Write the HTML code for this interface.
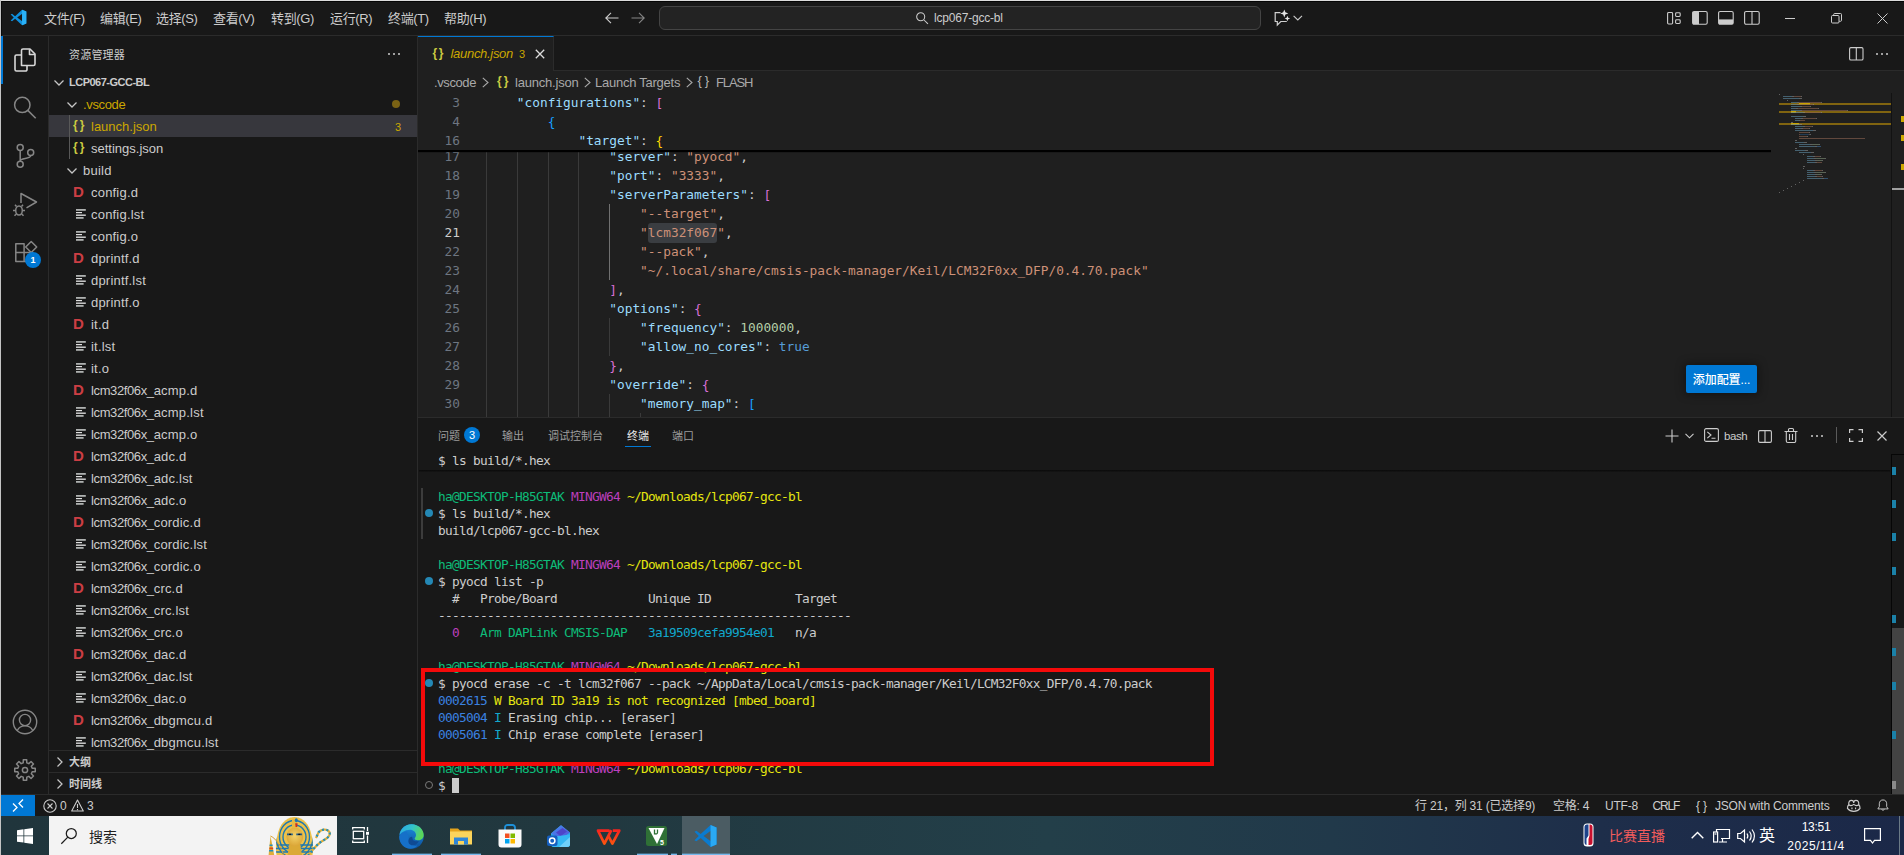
<!DOCTYPE html>
<html lang="zh-CN"><head><meta charset="utf-8"><title>launch.json - lcp067-gcc-bl - Visual Studio Code</title>
<style>
*{box-sizing:border-box;margin:0;padding:0}
html,body{width:1904px;height:855px;overflow:hidden;background:#181818}
body{position:relative;font-family:"Liberation Sans","Noto Sans CJK SC",sans-serif;font-size:13px;color:#ccc;-webkit-font-smoothing:antialiased}
.a{position:absolute;white-space:pre}
.b{position:absolute}
svg{position:absolute;overflow:visible}
.mono{font-family:"DejaVu Sans Mono","Liberation Mono","Noto Sans CJK SC",monospace}
.row{position:absolute;left:49px;width:368px;height:22px}
.row .t{position:absolute;top:1px;line-height:22px;font-size:13px;white-space:pre;letter-spacing:0.2px}
.row .t i{font-style:normal;letter-spacing:-0.38px}
.ln{position:absolute;left:418px;width:42px;text-align:right;font-family:"DejaVu Sans Mono","Liberation Mono","Noto Sans CJK SC",monospace;font-size:12.8px;letter-spacing:0;color:#6e7681;line-height:19px;height:19px}
.cl{position:absolute;left:486px;font-family:"DejaVu Sans Mono","Liberation Mono","Noto Sans CJK SC",monospace;font-size:12.8px;letter-spacing:0;line-height:19px;height:19px;white-space:pre;color:#ccc}
.k{color:#9cdcfe}.s{color:#ce9178}.n{color:#b5cea8}.c{color:#569cd6}
.b1{color:#ffd700}.b2{color:#da70d6}.b3{color:#179fff}
.tl{position:absolute;left:438px;font-family:"DejaVu Sans Mono","Liberation Mono","Noto Sans CJK SC",monospace;font-size:12.8px;letter-spacing:-0.706px;line-height:17px;height:17px;white-space:pre;color:#ccc}
.g{color:#0dbc79}.m{color:#bc3fbc}.y{color:#e5e510}.cy{color:#11a8cd}.bl{color:#3b82e0}
.st{position:absolute;top:796px;height:21px;line-height:21px;font-size:12px;white-space:pre;color:#ccc;letter-spacing:-0.2px}
</style></head><body>

<div class="b" style="left:0;top:0;width:1904px;height:36px;background:#181818;border-bottom:1px solid #2b2b2b"></div>
<div class="b" style="left:0;top:0;width:1904px;height:1px;background:#dcdcdc"></div>
<div class="b" style="left:1px;top:1px;width:1903px;height:1px;background:#050505"></div>
<div class="b" style="left:1px;top:1px;width:1px;height:35px;background:#0a0a0a"></div>
<div class="b" style="left:0;top:0;width:1px;height:855px;background:#c4c4c4;z-index:50"></div>
<svg style="left:10px;top:9.200px" width="17" height="17" viewBox="0 0 100 100"><path d="M71 4 L30 42 L12 28 L4 32 L22 50 L4 68 L12 72 L30 58 L71 96 L96 85 V15 Z M72 28 V72 L42 50 Z" fill="#0f8fdc" fill-rule="evenodd"/><path d="M71 4 L96 15 V85 L71 96 Z" fill="#2ab1f6"/></svg>
<div class="a" style="left:44px;top:9px;line-height:20px;font-size:13px;letter-spacing:-0.350px;color:#ccc">文件(F)</div>
<div class="a" style="left:100px;top:9px;line-height:20px;font-size:13px;letter-spacing:-0.350px;color:#ccc">编辑(E)</div>
<div class="a" style="left:156px;top:9px;line-height:20px;font-size:13px;letter-spacing:-0.350px;color:#ccc">选择(S)</div>
<div class="a" style="left:213px;top:9px;line-height:20px;font-size:13px;letter-spacing:-0.350px;color:#ccc">查看(V)</div>
<div class="a" style="left:271px;top:9px;line-height:20px;font-size:13px;letter-spacing:-0.350px;color:#ccc">转到(G)</div>
<div class="a" style="left:330px;top:9px;line-height:20px;font-size:13px;letter-spacing:-0.350px;color:#ccc">运行(R)</div>
<div class="a" style="left:388px;top:9px;line-height:20px;font-size:13px;letter-spacing:-0.350px;color:#ccc">终端(T)</div>
<div class="a" style="left:444px;top:9px;line-height:20px;font-size:13px;letter-spacing:-0.350px;color:#ccc">帮助(H)</div>
<svg style="left:604px;top:10px" width="16" height="16" viewBox="0 0 16 16" fill="none" stroke="#ccc" stroke-width="1.1"><path d="M14.5 8H2M7 2.8 1.8 8 7 13.2"/></svg>
<svg style="left:630px;top:10px" width="16" height="16" viewBox="0 0 16 16" fill="none" stroke="#858585" stroke-width="1.1"><path d="M1.5 8H14M9 2.8 14.2 8 9 13.2"/></svg>
<div class="b" style="left:659px;top:6px;width:602px;height:24px;background:#232323;border:1px solid #444;border-radius:6px"></div>
<svg style="left:915px;top:11px" width="14" height="14" viewBox="0 0 16 16" fill="none" stroke="#ccc" stroke-width="1.2"><circle cx="6.5" cy="6.5" r="4.6"/><path d="M10 10l4.8 4.8"/></svg>
<div class="a" style="left:934px;top:8px;line-height:20px;font-size:12px;color:#ccc;letter-spacing:-0.2px">lcp067-gcc-bl</div>
<svg style="left:1273px;top:8px" width="19" height="19" viewBox="1273 8 19 19" fill="none" stroke="#d0d0d0" stroke-width="1.200"><path d="M1280.500 12.600H1275.200V21.500H1277.300V25L1280.800 21.500H1286.800"/><path d="M1284.300 9.400l1.100 2.900 2.900 1.100-2.900 1.100-1.100 2.900-1.100-2.900-2.900-1.100 2.900-1.100z" fill="#e4e4e4" stroke="none"/><path d="M1287.400 15.700l.8 2 2 .8-2 .8-.8 2-.8-2-2-.8 2-.8z" fill="#e4e4e4" stroke="none"/></svg>
<svg style="left:1293px;top:15px" width="10" height="6" viewBox="0 0 10 6" fill="none" stroke="#ccc" stroke-width="1.100"><path d="M.600.800 4.800 5 9 .800"/></svg>
<svg style="left:1667px;top:11.500px" width="15" height="13" preserveAspectRatio="none" viewBox="0 0 15 14" fill="none" stroke="#ccc" stroke-width="1.1"><rect x=".6" y=".6" width="5" height="12.2" rx="1"/><rect x="8.6" y=".9" width="4.6" height="4" rx="1"/><rect x="8.6" y="8.3" width="4.6" height="4" rx="1"/></svg>
<svg style="left:1692px;top:11px" width="16" height="14" preserveAspectRatio="none" viewBox="0 0 16 15" fill="none" stroke="#ccc" stroke-width="1.1"><rect x=".6" y=".6" width="14.6" height="13.6" rx="1.5"/><path d="M1 1h6v13H1z" fill="#ccc" stroke="none"/></svg>
<svg style="left:1718px;top:11px" width="16" height="14" preserveAspectRatio="none" viewBox="0 0 16 15" fill="none" stroke="#ccc" stroke-width="1.1"><rect x=".6" y=".6" width="14.6" height="13.6" rx="1.5"/><path d="M1 9h14v5H1z" fill="#ccc" stroke="none"/></svg>
<svg style="left:1744px;top:11px" width="16" height="14" preserveAspectRatio="none" viewBox="0 0 16 15" fill="none" stroke="#ccc" stroke-width="1.1"><rect x=".6" y=".6" width="14.6" height="13.6" rx="1.5"/><path d="M8 1v13"/></svg>
<div class="b" style="left:1785px;top:18px;width:10px;height:1px;background:#ccc"></div>
<svg style="left:1831px;top:13px" width="11" height="11" viewBox="0 0 11 11" fill="none" stroke="#ccc" stroke-width="1"><rect x=".5" y="2.5" width="7.5" height="7.5" rx="1"/><path d="M2.7 2.4V1.5a1 1 0 0 1 1-1h5.8a1 1 0 0 1 1 1v5.8a1 1 0 0 1-1 1H8.2"/></svg>
<svg style="left:1877px;top:13px" width="11" height="11" viewBox="0 0 11 11" fill="none" stroke="#ccc" stroke-width="1"><path d="M.5.5l10 10M10.500.5l-10 10"/></svg>
<div class="b" style="left:1px;top:36px;width:48px;height:759px;background:#181818;border-right:1px solid #2b2b2b"></div>
<div class="b" style="left:1px;top:36px;width:2px;height:48px;background:#0078d4"></div>
<svg style="left:13px;top:47px" width="24" height="26" viewBox="0 0 24 26" fill="none" stroke="#d7d7d7" stroke-width="1.6" stroke-linejoin="round"><path d="M8.5 18.5V3.5a1.5 1.5 0 0 1 1.500-1.5H17l5 5v10a1.5 1.500 0 0 1-1.500 1.500z"/><path d="M16.500 2.200V7.500H22" /><path d="M8.500 8H3.500A1.500 1.500 0 0 0 2 9.500v13A1.500 1.500 0 0 0 3.500 24h9a1.500 1.500 0 0 0 1.500-1.500v-4"/></svg>
<svg style="left:13px;top:95px" width="24" height="24" viewBox="0 0 24 24" fill="none" stroke="#868686" stroke-width="1.500"><circle cx="9.300" cy="9.900" r="7.700"/><path d="M14.800 15.400 22.700 23.300"/></svg>
<svg style="left:13px;top:143px" width="24" height="26" viewBox="0 0 24 26" fill="none" stroke="#868686" stroke-width="1.500"><circle cx="7.200" cy="4.500" r="3"/><circle cx="7.200" cy="21.200" r="3"/><circle cx="17.700" cy="9.500" r="3"/><path d="M7.200 7.500v10.700M17.700 12.500c0 4-10.500 2-10.500 5.500"/></svg>
<svg style="left:11px;top:190px" width="28" height="28" viewBox="0 0 28 28" fill="none" stroke="#868686" stroke-width="1.500" stroke-linejoin="round"><path d="M10 13V3.500L25.500 12 15.500 17.800"/><ellipse cx="8" cy="20.500" rx="3.300" ry="4.500"/><path d="M5.500 16.500 4 14.800M10.500 16.500l1.500-1.700M4.700 20.500H2M11.300 20.500H14M5.300 24l-1.800 1.800M10.700 24l1.800 1.800"/></svg>
<svg style="left:15px;top:239px" width="24" height="24" viewBox="0 0 24 24" fill="none" stroke="#868686" stroke-width="1.500" stroke-linejoin="round"><path d="M.800 4.800h8.300v8.800H.800zM.800 13.600h8.300v8.800H.800zM9.100 13.600h8.300v8.800H9.100z"/><path d="M16.200 2.500 21.700 8 16.200 13.500 10.700 8z"/></svg>
<div class="b" style="left:25px;top:252px;width:16px;height:16px;border-radius:8px;background:#0078d4"></div>
<div class="a" style="left:25px;top:252px;width:16px;text-align:center;line-height:16px;font-size:9px;font-weight:bold;color:#fff">1</div>
<svg style="left:12px;top:709px" width="26" height="26" viewBox="0 0 26 26" fill="none" stroke="#868686" stroke-width="1.400"><circle cx="13" cy="13" r="11.700"/><circle cx="13" cy="11" r="5.600"/><path d="M5.300 21.500c1.500-3 4.300-4.600 7.700-4.600s6.200 1.600 7.700 4.600"/></svg>
<svg style="left:14px;top:759px" width="22" height="22" viewBox="0 0 22 22" fill="none" stroke="#868686" stroke-width="1.500" stroke-linejoin="round"><circle cx="11" cy="11" r="2.600"/><path d="M9.22 3.82 L9.29 0.74 L12.71 0.74 L12.78 3.82 L14.82 4.66 L17.05 2.54 L19.46 4.95 L17.34 7.18 L18.18 9.22 L21.26 9.29 L21.26 12.71 L18.18 12.78 L17.34 14.82 L19.46 17.05 L17.05 19.46 L14.82 17.34 L12.78 18.18 L12.71 21.26 L9.29 21.26 L9.22 18.18 L7.18 17.34 L4.95 19.46 L2.54 17.05 L4.66 14.82 L3.82 12.78 L0.74 12.71 L0.74 9.29 L3.82 9.22 L4.66 7.18 L2.54 4.95 L4.95 2.54 L7.18 4.66Z"/></svg>
<div class="b" style="left:49px;top:36px;width:369px;height:759px;background:#181818;border-right:1px solid #2b2b2b"></div>
<div class="a" style="left:69px;top:44.500px;line-height:20px;font-size:11px;color:#ccc;letter-spacing:0.200px">资源管理器</div>
<svg style="left:387px;top:52px" width="14" height="4" viewBox="0 0 14 4" fill="#ccc"><circle cx="2" cy="2" r="1"/><circle cx="7" cy="2" r="1"/><circle cx="12" cy="2" r="1"/></svg>
<svg style="left:54px;top:79.5px" width="10" height="6" viewBox="0 0 10 6" fill="none" stroke="#c5c5c5" stroke-width="1.250"><path d="M.5.500 5 5 9.500.500"/></svg>
<div class="a" style="left:69px;top:71px;line-height:22px;font-size:11px;font-weight:bold;color:#ccc;letter-spacing:-0.500px">LCP067-GCC-BL</div>
<div class="b" style="left:49px;top:93px;width:368px;height:657px;overflow:hidden">
<div class="row" style="left:0;top:0px;">
<svg style="left:18px;top:8.5px" width="10" height="6" viewBox="0 0 10 6" fill="none" stroke="#c5c5c5" stroke-width="1.250"><path d="M.5.500 5 5 9.500.500"/></svg>
<div class="t" style="left:34px;color:#cca700;letter-spacing:-0.350px">.vscode</div>
<div class="b" style="left:343px;top:7px;width:8px;height:8px;border-radius:4px;background:#7a6214"></div>
</div>
<div class="row" style="left:0;top:22px; background:#37373d;">
<div class="a" style="left:24px;top:-1px;line-height:22px;font-size:12px;font-weight:bold;color:#cbcb41;letter-spacing:2px">{}</div>
<div class="t" style="left:42px;color:#cca700;letter-spacing:0">launch.json</div>
<div class="t" style="left:346px;color:#cca700;font-size:11px">3</div>
</div>
<div class="row" style="left:0;top:44px;">
<div class="a" style="left:24px;top:-1px;line-height:22px;font-size:12px;font-weight:bold;color:#cbcb41;letter-spacing:2px">{}</div>
<div class="t" style="left:42px;color:#ccc;letter-spacing:0">settings.json</div>
</div>
<div class="row" style="left:0;top:66px;">
<svg style="left:18px;top:8.5px" width="10" height="6" viewBox="0 0 10 6" fill="none" stroke="#c5c5c5" stroke-width="1.250"><path d="M.5.500 5 5 9.500.500"/></svg>
<div class="t" style="left:34px;color:#ccc;letter-spacing:0.250px">build</div>
</div>
<div class="row" style="left:0;top:88px;">
<div class="a" style="left:24px;top:0px;line-height:22px;font-size:15px;font-weight:bold;color:#cc3e44">D</div>
<div class="t" style="left:42px;color:#ccc">config.d</div>
</div>
<div class="row" style="left:0;top:110px;">
<svg style="left:27px;top:6px" width="10" height="10" viewBox="0 0 10 10" fill="#c3c6c5"><rect x="0" y="0" width="9.800" height="1.800" fill="#aeb1b0"/><rect x="0" y="3" width="6" height="1.200" fill="#e0e0e0"/><rect x="0" y="5.500" width="9.800" height="1.400" fill="#d8d8d8"/><rect x="0" y="8" width="7.600" height="1.800" fill="#aeb1b0"/></svg>
<div class="t" style="left:42px;color:#ccc">config.lst</div>
</div>
<div class="row" style="left:0;top:132px;">
<svg style="left:27px;top:6px" width="10" height="10" viewBox="0 0 10 10" fill="#c3c6c5"><rect x="0" y="0" width="9.800" height="1.800" fill="#aeb1b0"/><rect x="0" y="3" width="6" height="1.200" fill="#e0e0e0"/><rect x="0" y="5.500" width="9.800" height="1.400" fill="#d8d8d8"/><rect x="0" y="8" width="7.600" height="1.800" fill="#aeb1b0"/></svg>
<div class="t" style="left:42px;color:#ccc">config.o</div>
</div>
<div class="row" style="left:0;top:154px;">
<div class="a" style="left:24px;top:0px;line-height:22px;font-size:15px;font-weight:bold;color:#cc3e44">D</div>
<div class="t" style="left:42px;color:#ccc">dprintf.d</div>
</div>
<div class="row" style="left:0;top:176px;">
<svg style="left:27px;top:6px" width="10" height="10" viewBox="0 0 10 10" fill="#c3c6c5"><rect x="0" y="0" width="9.800" height="1.800" fill="#aeb1b0"/><rect x="0" y="3" width="6" height="1.200" fill="#e0e0e0"/><rect x="0" y="5.500" width="9.800" height="1.400" fill="#d8d8d8"/><rect x="0" y="8" width="7.600" height="1.800" fill="#aeb1b0"/></svg>
<div class="t" style="left:42px;color:#ccc">dprintf.lst</div>
</div>
<div class="row" style="left:0;top:198px;">
<svg style="left:27px;top:6px" width="10" height="10" viewBox="0 0 10 10" fill="#c3c6c5"><rect x="0" y="0" width="9.800" height="1.800" fill="#aeb1b0"/><rect x="0" y="3" width="6" height="1.200" fill="#e0e0e0"/><rect x="0" y="5.500" width="9.800" height="1.400" fill="#d8d8d8"/><rect x="0" y="8" width="7.600" height="1.800" fill="#aeb1b0"/></svg>
<div class="t" style="left:42px;color:#ccc">dprintf.o</div>
</div>
<div class="row" style="left:0;top:220px;">
<div class="a" style="left:24px;top:0px;line-height:22px;font-size:15px;font-weight:bold;color:#cc3e44">D</div>
<div class="t" style="left:42px;color:#ccc">it.d</div>
</div>
<div class="row" style="left:0;top:242px;">
<svg style="left:27px;top:6px" width="10" height="10" viewBox="0 0 10 10" fill="#c3c6c5"><rect x="0" y="0" width="9.800" height="1.800" fill="#aeb1b0"/><rect x="0" y="3" width="6" height="1.200" fill="#e0e0e0"/><rect x="0" y="5.500" width="9.800" height="1.400" fill="#d8d8d8"/><rect x="0" y="8" width="7.600" height="1.800" fill="#aeb1b0"/></svg>
<div class="t" style="left:42px;color:#ccc">it.lst</div>
</div>
<div class="row" style="left:0;top:264px;">
<svg style="left:27px;top:6px" width="10" height="10" viewBox="0 0 10 10" fill="#c3c6c5"><rect x="0" y="0" width="9.800" height="1.800" fill="#aeb1b0"/><rect x="0" y="3" width="6" height="1.200" fill="#e0e0e0"/><rect x="0" y="5.500" width="9.800" height="1.400" fill="#d8d8d8"/><rect x="0" y="8" width="7.600" height="1.800" fill="#aeb1b0"/></svg>
<div class="t" style="left:42px;color:#ccc">it.o</div>
</div>
<div class="row" style="left:0;top:286px;">
<div class="a" style="left:24px;top:0px;line-height:22px;font-size:15px;font-weight:bold;color:#cc3e44">D</div>
<div class="t" style="left:42px;color:#ccc"><i>lcm32f06x_</i>acmp.d</div>
</div>
<div class="row" style="left:0;top:308px;">
<svg style="left:27px;top:6px" width="10" height="10" viewBox="0 0 10 10" fill="#c3c6c5"><rect x="0" y="0" width="9.800" height="1.800" fill="#aeb1b0"/><rect x="0" y="3" width="6" height="1.200" fill="#e0e0e0"/><rect x="0" y="5.500" width="9.800" height="1.400" fill="#d8d8d8"/><rect x="0" y="8" width="7.600" height="1.800" fill="#aeb1b0"/></svg>
<div class="t" style="left:42px;color:#ccc"><i>lcm32f06x_</i>acmp.lst</div>
</div>
<div class="row" style="left:0;top:330px;">
<svg style="left:27px;top:6px" width="10" height="10" viewBox="0 0 10 10" fill="#c3c6c5"><rect x="0" y="0" width="9.800" height="1.800" fill="#aeb1b0"/><rect x="0" y="3" width="6" height="1.200" fill="#e0e0e0"/><rect x="0" y="5.500" width="9.800" height="1.400" fill="#d8d8d8"/><rect x="0" y="8" width="7.600" height="1.800" fill="#aeb1b0"/></svg>
<div class="t" style="left:42px;color:#ccc"><i>lcm32f06x_</i>acmp.o</div>
</div>
<div class="row" style="left:0;top:352px;">
<div class="a" style="left:24px;top:0px;line-height:22px;font-size:15px;font-weight:bold;color:#cc3e44">D</div>
<div class="t" style="left:42px;color:#ccc"><i>lcm32f06x_</i>adc.d</div>
</div>
<div class="row" style="left:0;top:374px;">
<svg style="left:27px;top:6px" width="10" height="10" viewBox="0 0 10 10" fill="#c3c6c5"><rect x="0" y="0" width="9.800" height="1.800" fill="#aeb1b0"/><rect x="0" y="3" width="6" height="1.200" fill="#e0e0e0"/><rect x="0" y="5.500" width="9.800" height="1.400" fill="#d8d8d8"/><rect x="0" y="8" width="7.600" height="1.800" fill="#aeb1b0"/></svg>
<div class="t" style="left:42px;color:#ccc"><i>lcm32f06x_</i>adc.lst</div>
</div>
<div class="row" style="left:0;top:396px;">
<svg style="left:27px;top:6px" width="10" height="10" viewBox="0 0 10 10" fill="#c3c6c5"><rect x="0" y="0" width="9.800" height="1.800" fill="#aeb1b0"/><rect x="0" y="3" width="6" height="1.200" fill="#e0e0e0"/><rect x="0" y="5.500" width="9.800" height="1.400" fill="#d8d8d8"/><rect x="0" y="8" width="7.600" height="1.800" fill="#aeb1b0"/></svg>
<div class="t" style="left:42px;color:#ccc"><i>lcm32f06x_</i>adc.o</div>
</div>
<div class="row" style="left:0;top:418px;">
<div class="a" style="left:24px;top:0px;line-height:22px;font-size:15px;font-weight:bold;color:#cc3e44">D</div>
<div class="t" style="left:42px;color:#ccc"><i>lcm32f06x_</i>cordic.d</div>
</div>
<div class="row" style="left:0;top:440px;">
<svg style="left:27px;top:6px" width="10" height="10" viewBox="0 0 10 10" fill="#c3c6c5"><rect x="0" y="0" width="9.800" height="1.800" fill="#aeb1b0"/><rect x="0" y="3" width="6" height="1.200" fill="#e0e0e0"/><rect x="0" y="5.500" width="9.800" height="1.400" fill="#d8d8d8"/><rect x="0" y="8" width="7.600" height="1.800" fill="#aeb1b0"/></svg>
<div class="t" style="left:42px;color:#ccc"><i>lcm32f06x_</i>cordic.lst</div>
</div>
<div class="row" style="left:0;top:462px;">
<svg style="left:27px;top:6px" width="10" height="10" viewBox="0 0 10 10" fill="#c3c6c5"><rect x="0" y="0" width="9.800" height="1.800" fill="#aeb1b0"/><rect x="0" y="3" width="6" height="1.200" fill="#e0e0e0"/><rect x="0" y="5.500" width="9.800" height="1.400" fill="#d8d8d8"/><rect x="0" y="8" width="7.600" height="1.800" fill="#aeb1b0"/></svg>
<div class="t" style="left:42px;color:#ccc"><i>lcm32f06x_</i>cordic.o</div>
</div>
<div class="row" style="left:0;top:484px;">
<div class="a" style="left:24px;top:0px;line-height:22px;font-size:15px;font-weight:bold;color:#cc3e44">D</div>
<div class="t" style="left:42px;color:#ccc"><i>lcm32f06x_</i>crc.d</div>
</div>
<div class="row" style="left:0;top:506px;">
<svg style="left:27px;top:6px" width="10" height="10" viewBox="0 0 10 10" fill="#c3c6c5"><rect x="0" y="0" width="9.800" height="1.800" fill="#aeb1b0"/><rect x="0" y="3" width="6" height="1.200" fill="#e0e0e0"/><rect x="0" y="5.500" width="9.800" height="1.400" fill="#d8d8d8"/><rect x="0" y="8" width="7.600" height="1.800" fill="#aeb1b0"/></svg>
<div class="t" style="left:42px;color:#ccc"><i>lcm32f06x_</i>crc.lst</div>
</div>
<div class="row" style="left:0;top:528px;">
<svg style="left:27px;top:6px" width="10" height="10" viewBox="0 0 10 10" fill="#c3c6c5"><rect x="0" y="0" width="9.800" height="1.800" fill="#aeb1b0"/><rect x="0" y="3" width="6" height="1.200" fill="#e0e0e0"/><rect x="0" y="5.500" width="9.800" height="1.400" fill="#d8d8d8"/><rect x="0" y="8" width="7.600" height="1.800" fill="#aeb1b0"/></svg>
<div class="t" style="left:42px;color:#ccc"><i>lcm32f06x_</i>crc.o</div>
</div>
<div class="row" style="left:0;top:550px;">
<div class="a" style="left:24px;top:0px;line-height:22px;font-size:15px;font-weight:bold;color:#cc3e44">D</div>
<div class="t" style="left:42px;color:#ccc"><i>lcm32f06x_</i>dac.d</div>
</div>
<div class="row" style="left:0;top:572px;">
<svg style="left:27px;top:6px" width="10" height="10" viewBox="0 0 10 10" fill="#c3c6c5"><rect x="0" y="0" width="9.800" height="1.800" fill="#aeb1b0"/><rect x="0" y="3" width="6" height="1.200" fill="#e0e0e0"/><rect x="0" y="5.500" width="9.800" height="1.400" fill="#d8d8d8"/><rect x="0" y="8" width="7.600" height="1.800" fill="#aeb1b0"/></svg>
<div class="t" style="left:42px;color:#ccc"><i>lcm32f06x_</i>dac.lst</div>
</div>
<div class="row" style="left:0;top:594px;">
<svg style="left:27px;top:6px" width="10" height="10" viewBox="0 0 10 10" fill="#c3c6c5"><rect x="0" y="0" width="9.800" height="1.800" fill="#aeb1b0"/><rect x="0" y="3" width="6" height="1.200" fill="#e0e0e0"/><rect x="0" y="5.500" width="9.800" height="1.400" fill="#d8d8d8"/><rect x="0" y="8" width="7.600" height="1.800" fill="#aeb1b0"/></svg>
<div class="t" style="left:42px;color:#ccc"><i>lcm32f06x_</i>dac.o</div>
</div>
<div class="row" style="left:0;top:616px;">
<div class="a" style="left:24px;top:0px;line-height:22px;font-size:15px;font-weight:bold;color:#cc3e44">D</div>
<div class="t" style="left:42px;color:#ccc"><i>lcm32f06x_</i>dbgmcu.d</div>
</div>
<div class="row" style="left:0;top:638px;">
<svg style="left:27px;top:6px" width="10" height="10" viewBox="0 0 10 10" fill="#c3c6c5"><rect x="0" y="0" width="9.800" height="1.800" fill="#aeb1b0"/><rect x="0" y="3" width="6" height="1.200" fill="#e0e0e0"/><rect x="0" y="5.500" width="9.800" height="1.400" fill="#d8d8d8"/><rect x="0" y="8" width="7.600" height="1.800" fill="#aeb1b0"/></svg>
<div class="t" style="left:42px;color:#ccc"><i>lcm32f06x_</i>dbgmcu.lst</div>
</div>
<div class="b" style="left:20px;top:22px;width:1px;height:44px;background:#585858"></div>
</div>
<div class="b" style="left:49px;top:750px;width:368px;height:22px;background:#181818;border-top:1px solid #2b2b2b"></div>
<svg style="left:57px;top:757px" width="6" height="10" viewBox="0 0 6 10" fill="none" stroke="#c5c5c5" stroke-width="1.250"><path d="M.5.500 5 5 .500 9.500"/></svg>
<div class="a" style="left:69px;top:751px;line-height:22px;font-size:11px;font-weight:bold;color:#ccc">大纲</div>
<div class="b" style="left:49px;top:772px;width:368px;height:22px;background:#181818;border-top:1px solid #2b2b2b"></div>
<svg style="left:57px;top:779px" width="6" height="10" viewBox="0 0 6 10" fill="none" stroke="#c5c5c5" stroke-width="1.250"><path d="M.5.500 5 5 .500 9.500"/></svg>
<div class="a" style="left:69px;top:773px;line-height:22px;font-size:11px;font-weight:bold;color:#ccc">时间线</div>
<div class="b" style="left:418px;top:36px;width:1486px;height:35px;background:#181818;border-bottom:1px solid #2b2b2b"></div>
<div class="b" style="left:418px;top:36px;width:136px;height:35px;background:#1f1f1f;border-top:1px solid #0078d4;border-right:1px solid #2b2b2b"></div>
<div class="a" style="left:432.500px;top:41.5px;line-height:22px;font-size:12px;font-weight:bold;color:#cbcb41;letter-spacing:1.700px">{}</div>
<div class="a" style="left:450.500px;top:43px;line-height:22px;font-size:13px;font-style:italic;color:#cca700;letter-spacing:-0.300px">launch.json</div>
<div class="a" style="left:519px;top:42.500px;line-height:22px;font-size:11px;color:#cca700">3</div>
<svg style="left:535px;top:49px" width="10" height="10" viewBox="0 0 10 10" fill="none" stroke="#ddd" stroke-width="1.300"><path d="M.8.800l8.400 8.400M9.200.800.800 9.200"/></svg>
<svg style="left:1849px;top:47px" width="15" height="14" viewBox="0 0 15 14" fill="none" stroke="#ccc" stroke-width="1.100"><rect x=".6" y=".6" width="13.400" height="12.400" rx="1.300"/><path d="M7.300 1v12"/></svg>
<svg style="left:1875px;top:52px" width="14" height="4" viewBox="0 0 14 4" fill="#ccc"><circle cx="2" cy="2" r="1"/><circle cx="7" cy="2" r="1"/><circle cx="12" cy="2" r="1"/></svg>
<div class="b" style="left:418px;top:71px;width:1486px;height:347px;background:#1f1f1f"></div>
<div class="a" style="left:434px;top:71.5px;line-height:22px;font-size:13px;color:#a9a9a9;letter-spacing:-0.400px">.vscode</div>
<div class="a" style="left:515px;top:71.5px;line-height:22px;font-size:13px;color:#a9a9a9;letter-spacing:-0.200px">launch.json</div>
<div class="a" style="left:595px;top:71.5px;line-height:22px;font-size:13px;color:#a9a9a9;letter-spacing:-0.250px">Launch Targets</div>
<div class="a" style="left:716px;top:71.5px;line-height:22px;font-size:13px;color:#a9a9a9;letter-spacing:-1.100px">FLASH</div>
<svg style="left:482px;top:77px" width="7" height="11" viewBox="0 0 7 11" fill="none" stroke="#a9a9a9" stroke-width="1.100"><path d="M.8.800 6 5.500.800 10.200"/></svg>
<svg style="left:584px;top:77px" width="7" height="11" viewBox="0 0 7 11" fill="none" stroke="#a9a9a9" stroke-width="1.100"><path d="M.8.800 6 5.500.800 10.200"/></svg>
<svg style="left:686px;top:77px" width="7" height="11" viewBox="0 0 7 11" fill="none" stroke="#a9a9a9" stroke-width="1.100"><path d="M.8.800 6 5.500.800 10.200"/></svg>
<div class="a" style="left:497px;top:70px;line-height:22px;font-size:12px;font-weight:bold;color:#cbcb41;letter-spacing:2px">{}</div>
<div class="a" style="left:697.5px;top:70px;line-height:22px;font-size:13px;color:#b8b8b8;letter-spacing:3px">{}</div>
<div class="b" style="left:418px;top:93px;width:1472px;height:325px;overflow:hidden">
<div class="ln" style="left:0;top:54px;">17</div>
<div class="cl" style="left:68px;top:54px">                <span class="k">&quot;server&quot;</span>: <span class="s">&quot;pyocd&quot;</span>,</div>
<div class="b" style="left:68px;top:54px;width:1px;height:19px;background:#3a3a3a"></div>
<div class="b" style="left:99px;top:54px;width:1px;height:19px;background:#3a3a3a"></div>
<div class="b" style="left:130px;top:54px;width:1px;height:19px;background:#3a3a3a"></div>
<div class="b" style="left:160px;top:54px;width:1px;height:19px;background:#3a3a3a"></div>
<div class="ln" style="left:0;top:73px;">18</div>
<div class="cl" style="left:68px;top:73px">                <span class="k">&quot;port&quot;</span>: <span class="s">&quot;3333&quot;</span>,</div>
<div class="b" style="left:68px;top:73px;width:1px;height:19px;background:#3a3a3a"></div>
<div class="b" style="left:99px;top:73px;width:1px;height:19px;background:#3a3a3a"></div>
<div class="b" style="left:130px;top:73px;width:1px;height:19px;background:#3a3a3a"></div>
<div class="b" style="left:160px;top:73px;width:1px;height:19px;background:#3a3a3a"></div>
<div class="ln" style="left:0;top:92px;">19</div>
<div class="cl" style="left:68px;top:92px">                <span class="k">&quot;serverParameters&quot;</span>: <span class="b2">[</span></div>
<div class="b" style="left:68px;top:92px;width:1px;height:19px;background:#3a3a3a"></div>
<div class="b" style="left:99px;top:92px;width:1px;height:19px;background:#3a3a3a"></div>
<div class="b" style="left:130px;top:92px;width:1px;height:19px;background:#3a3a3a"></div>
<div class="b" style="left:160px;top:92px;width:1px;height:19px;background:#3a3a3a"></div>
<div class="ln" style="left:0;top:111px;">20</div>
<div class="cl" style="left:68px;top:111px">                    <span class="s">&quot;--target&quot;</span>,</div>
<div class="b" style="left:68px;top:111px;width:1px;height:19px;background:#3a3a3a"></div>
<div class="b" style="left:99px;top:111px;width:1px;height:19px;background:#3a3a3a"></div>
<div class="b" style="left:130px;top:111px;width:1px;height:19px;background:#3a3a3a"></div>
<div class="b" style="left:160px;top:111px;width:1px;height:19px;background:#3a3a3a"></div>
<div class="b" style="left:191px;top:111px;width:1px;height:19px;background:#707070"></div>
<div class="ln" style="left:0;top:130px;color:#ccc;">21</div>
<div class="cl" style="left:68px;top:130px">                    <span class="s">&quot;</span><span class="s" style="background:#3a3d41;border-radius:3px;padding:2px 0 2.500px">lcm32f067</span><span class="s">&quot;</span>,</div>
<div class="b" style="left:68px;top:130px;width:1px;height:19px;background:#3a3a3a"></div>
<div class="b" style="left:99px;top:130px;width:1px;height:19px;background:#3a3a3a"></div>
<div class="b" style="left:130px;top:130px;width:1px;height:19px;background:#3a3a3a"></div>
<div class="b" style="left:160px;top:130px;width:1px;height:19px;background:#3a3a3a"></div>
<div class="b" style="left:191px;top:130px;width:1px;height:19px;background:#707070"></div>
<div class="ln" style="left:0;top:149px;">22</div>
<div class="cl" style="left:68px;top:149px">                    <span class="s">&quot;--pack&quot;</span>,</div>
<div class="b" style="left:68px;top:149px;width:1px;height:19px;background:#3a3a3a"></div>
<div class="b" style="left:99px;top:149px;width:1px;height:19px;background:#3a3a3a"></div>
<div class="b" style="left:130px;top:149px;width:1px;height:19px;background:#3a3a3a"></div>
<div class="b" style="left:160px;top:149px;width:1px;height:19px;background:#3a3a3a"></div>
<div class="b" style="left:191px;top:149px;width:1px;height:19px;background:#707070"></div>
<div class="ln" style="left:0;top:168px;">23</div>
<div class="cl" style="left:68px;top:168px">                    <span class="s">&quot;~/.local/share/cmsis-pack-manager/Keil/LCM32F0xx_DFP/0.4.70.pack&quot;</span></div>
<div class="b" style="left:68px;top:168px;width:1px;height:19px;background:#3a3a3a"></div>
<div class="b" style="left:99px;top:168px;width:1px;height:19px;background:#3a3a3a"></div>
<div class="b" style="left:130px;top:168px;width:1px;height:19px;background:#3a3a3a"></div>
<div class="b" style="left:160px;top:168px;width:1px;height:19px;background:#3a3a3a"></div>
<div class="b" style="left:191px;top:168px;width:1px;height:19px;background:#707070"></div>
<div class="ln" style="left:0;top:187px;">24</div>
<div class="cl" style="left:68px;top:187px">                <span class="b2">]</span>,</div>
<div class="b" style="left:68px;top:187px;width:1px;height:19px;background:#3a3a3a"></div>
<div class="b" style="left:99px;top:187px;width:1px;height:19px;background:#3a3a3a"></div>
<div class="b" style="left:130px;top:187px;width:1px;height:19px;background:#3a3a3a"></div>
<div class="b" style="left:160px;top:187px;width:1px;height:19px;background:#3a3a3a"></div>
<div class="ln" style="left:0;top:206px;">25</div>
<div class="cl" style="left:68px;top:206px">                <span class="k">&quot;options&quot;</span>: <span class="b2">{</span></div>
<div class="b" style="left:68px;top:206px;width:1px;height:19px;background:#3a3a3a"></div>
<div class="b" style="left:99px;top:206px;width:1px;height:19px;background:#3a3a3a"></div>
<div class="b" style="left:130px;top:206px;width:1px;height:19px;background:#3a3a3a"></div>
<div class="b" style="left:160px;top:206px;width:1px;height:19px;background:#3a3a3a"></div>
<div class="ln" style="left:0;top:225px;">26</div>
<div class="cl" style="left:68px;top:225px">                    <span class="k">&quot;frequency&quot;</span>: <span class="n">1000000</span>,</div>
<div class="b" style="left:68px;top:225px;width:1px;height:19px;background:#3a3a3a"></div>
<div class="b" style="left:99px;top:225px;width:1px;height:19px;background:#3a3a3a"></div>
<div class="b" style="left:130px;top:225px;width:1px;height:19px;background:#3a3a3a"></div>
<div class="b" style="left:160px;top:225px;width:1px;height:19px;background:#3a3a3a"></div>
<div class="b" style="left:191px;top:225px;width:1px;height:19px;background:#3a3a3a"></div>
<div class="ln" style="left:0;top:244px;">27</div>
<div class="cl" style="left:68px;top:244px">                    <span class="k">&quot;allow_no_cores&quot;</span>: <span class="c">true</span></div>
<div class="b" style="left:68px;top:244px;width:1px;height:19px;background:#3a3a3a"></div>
<div class="b" style="left:99px;top:244px;width:1px;height:19px;background:#3a3a3a"></div>
<div class="b" style="left:130px;top:244px;width:1px;height:19px;background:#3a3a3a"></div>
<div class="b" style="left:160px;top:244px;width:1px;height:19px;background:#3a3a3a"></div>
<div class="b" style="left:191px;top:244px;width:1px;height:19px;background:#3a3a3a"></div>
<div class="ln" style="left:0;top:263px;">28</div>
<div class="cl" style="left:68px;top:263px">                <span class="b2">}</span>,</div>
<div class="b" style="left:68px;top:263px;width:1px;height:19px;background:#3a3a3a"></div>
<div class="b" style="left:99px;top:263px;width:1px;height:19px;background:#3a3a3a"></div>
<div class="b" style="left:130px;top:263px;width:1px;height:19px;background:#3a3a3a"></div>
<div class="b" style="left:160px;top:263px;width:1px;height:19px;background:#3a3a3a"></div>
<div class="ln" style="left:0;top:282px;">29</div>
<div class="cl" style="left:68px;top:282px">                <span class="k">&quot;override&quot;</span>: <span class="b2">{</span></div>
<div class="b" style="left:68px;top:282px;width:1px;height:19px;background:#3a3a3a"></div>
<div class="b" style="left:99px;top:282px;width:1px;height:19px;background:#3a3a3a"></div>
<div class="b" style="left:130px;top:282px;width:1px;height:19px;background:#3a3a3a"></div>
<div class="b" style="left:160px;top:282px;width:1px;height:19px;background:#3a3a3a"></div>
<div class="ln" style="left:0;top:301px;">30</div>
<div class="cl" style="left:68px;top:301px">                    <span class="k">&quot;memory_map&quot;</span>: <span class="b3">[</span></div>
<div class="b" style="left:68px;top:301px;width:1px;height:19px;background:#3a3a3a"></div>
<div class="b" style="left:99px;top:301px;width:1px;height:19px;background:#3a3a3a"></div>
<div class="b" style="left:130px;top:301px;width:1px;height:19px;background:#3a3a3a"></div>
<div class="b" style="left:160px;top:301px;width:1px;height:19px;background:#3a3a3a"></div>
<div class="b" style="left:191px;top:301px;width:1px;height:19px;background:#3a3a3a"></div>
<div class="b" style="left:68px;top:320px;width:1px;height:19px;background:#3a3a3a"></div>
<div class="b" style="left:99px;top:320px;width:1px;height:19px;background:#3a3a3a"></div>
<div class="b" style="left:130px;top:320px;width:1px;height:19px;background:#3a3a3a"></div>
<div class="b" style="left:160px;top:320px;width:1px;height:19px;background:#3a3a3a"></div>
<div class="b" style="left:191px;top:320px;width:1px;height:19px;background:#3a3a3a"></div>
<div class="b" style="left:222px;top:320px;width:1px;height:19px;background:#3a3a3a"></div>
</div>
<div class="b" style="left:418px;top:93px;width:1353px;height:57px;background:#1f1f1f"></div>
<div class="b" style="left:418px;top:150px;width:1353px;height:3px;background:linear-gradient(180deg,#000 0,#000 66%,rgba(0,0,0,.2) 67%,rgba(0,0,0,.2) 100%)"></div>
<div class="ln" style="top:93px">3</div>
<div class="cl" style="top:93px">    <span class="k">&quot;configurations&quot;</span>: <span class="b2">[</span></div>
<div class="ln" style="top:112px">4</div>
<div class="cl" style="top:112px">        <span class="b3">{</span></div>
<div class="ln" style="top:131px">16</div>
<div class="cl" style="top:131px">            <span class="k">&quot;target&quot;</span>: <span class="b1">{</span></div>
<div class="b" style="left:1686px;top:365px;width:71px;height:28px;background:#0078d4;border-radius:2px;box-shadow:0 0 8px 2px rgba(0,0,0,.36)"></div>
<div class="a" style="left:1686px;top:367px;width:71px;text-align:center;line-height:27px;font-size:12px;font-weight:500;color:#fff;letter-spacing:-0.100px">添加配置...</div>
<svg style="left:1779px;top:93px" width="112" height="110" viewBox="0 0 112 110">
<rect x="0" y="10" width="112" height="2" fill="#806410"/>
<rect x="0" y="18" width="112" height="2" fill="#806410"/>
<rect x="0" y="30" width="112" height="2" fill="#806410"/>
<rect x="20" y="10" width="11" height="2" fill="#c9a300"/><rect x="12" y="18" width="5" height="2" fill="#c9a300"/><rect x="12" y="30" width="8" height="2" fill="#c9a300"/>
<rect x="0" y="1" width="1" height="1" fill="#8a8a8a" opacity=".62"/>
<rect x="4" y="3" width="9" height="1" fill="#5d8aa3" opacity=".62"/>
<rect x="13" y="3" width="2" height="1" fill="#8a8a8a" opacity=".62"/>
<rect x="15" y="3" width="7" height="1" fill="#8a6250" opacity=".62"/>
<rect x="22" y="3" width="1" height="1" fill="#8a8a8a" opacity=".62"/>
<rect x="4" y="5" width="16" height="1" fill="#5d8aa3" opacity=".62"/>
<rect x="20" y="5" width="2" height="1" fill="#8a8a8a" opacity=".62"/>
<rect x="22" y="5" width="1" height="1" fill="#8a8a8a" opacity=".62"/>
<rect x="8" y="7" width="1" height="1" fill="#8a8a8a" opacity=".62"/>
<rect x="12" y="9" width="6" height="1" fill="#5d8aa3" opacity=".62"/>
<rect x="18" y="9" width="2" height="1" fill="#8a8a8a" opacity=".62"/>
<rect x="20" y="9" width="22" height="1" fill="#8a6250" opacity=".62"/>
<rect x="42" y="9" width="1" height="1" fill="#8a8a8a" opacity=".62"/>
<rect x="12" y="11" width="6" height="1" fill="#5d8aa3" opacity=".62"/>
<rect x="18" y="11" width="2" height="1" fill="#8a8a8a" opacity=".62"/>
<rect x="20" y="11" width="14" height="1" fill="#8a6250" opacity=".62"/>
<rect x="34" y="11" width="1" height="1" fill="#8a8a8a" opacity=".62"/>
<rect x="12" y="13" width="9" height="1" fill="#5d8aa3" opacity=".62"/>
<rect x="21" y="13" width="2" height="1" fill="#8a8a8a" opacity=".62"/>
<rect x="23" y="13" width="8" height="1" fill="#8a6250" opacity=".62"/>
<rect x="31" y="13" width="1" height="1" fill="#8a8a8a" opacity=".62"/>
<rect x="12" y="15" width="5" height="1" fill="#5d8aa3" opacity=".62"/>
<rect x="17" y="15" width="2" height="1" fill="#8a8a8a" opacity=".62"/>
<rect x="19" y="15" width="20" height="1" fill="#8a6250" opacity=".62"/>
<rect x="39" y="15" width="1" height="1" fill="#8a8a8a" opacity=".62"/>
<rect x="12" y="17" width="9" height="1" fill="#5d8aa3" opacity=".62"/>
<rect x="21" y="17" width="2" height="1" fill="#8a8a8a" opacity=".62"/>
<rect x="23" y="17" width="45" height="1" fill="#8a6250" opacity=".62"/>
<rect x="68" y="17" width="1" height="1" fill="#8a8a8a" opacity=".62"/>
<rect x="12" y="19" width="12" height="1" fill="#5d8aa3" opacity=".62"/>
<rect x="24" y="19" width="2" height="1" fill="#8a8a8a" opacity=".62"/>
<rect x="26" y="19" width="16" height="1" fill="#8a6250" opacity=".62"/>
<rect x="42" y="19" width="1" height="1" fill="#8a8a8a" opacity=".62"/>
<rect x="12" y="23" width="12" height="1" fill="#5d8aa3" opacity=".62"/>
<rect x="24" y="23" width="2" height="1" fill="#8a8a8a" opacity=".62"/>
<rect x="26" y="23" width="1" height="1" fill="#8a8a8a" opacity=".62"/>
<rect x="16" y="25" width="6" height="1" fill="#5d8aa3" opacity=".62"/>
<rect x="22" y="25" width="2" height="1" fill="#8a8a8a" opacity=".62"/>
<rect x="24" y="25" width="13" height="1" fill="#8a6250" opacity=".62"/>
<rect x="37" y="25" width="1" height="1" fill="#8a8a8a" opacity=".62"/>
<rect x="16" y="27" width="4" height="1" fill="#5d8aa3" opacity=".62"/>
<rect x="20" y="27" width="1" height="1" fill="#8a8a8a" opacity=".62"/>
<rect x="21" y="27" width="5" height="1" fill="#8a6250" opacity=".62"/>
<rect x="12" y="29" width="2" height="1" fill="#8a8a8a" opacity=".62"/>
<rect x="12" y="31" width="8" height="1" fill="#5d8aa3" opacity=".62"/>
<rect x="20" y="31" width="2" height="1" fill="#8a8a8a" opacity=".62"/>
<rect x="22" y="31" width="1" height="1" fill="#8a8a8a" opacity=".62"/>
<rect x="16" y="33" width="8" height="1" fill="#5d8aa3" opacity=".62"/>
<rect x="24" y="33" width="2" height="1" fill="#8a8a8a" opacity=".62"/>
<rect x="26" y="33" width="7" height="1" fill="#8a6250" opacity=".62"/>
<rect x="33" y="33" width="1" height="1" fill="#8a8a8a" opacity=".62"/>
<rect x="16" y="35" width="6" height="1" fill="#5d8aa3" opacity=".62"/>
<rect x="22" y="35" width="2" height="1" fill="#8a8a8a" opacity=".62"/>
<rect x="24" y="35" width="6" height="1" fill="#8a6250" opacity=".62"/>
<rect x="30" y="35" width="1" height="1" fill="#8a8a8a" opacity=".62"/>
<rect x="16" y="37" width="18" height="1" fill="#5d8aa3" opacity=".62"/>
<rect x="34" y="37" width="2" height="1" fill="#8a8a8a" opacity=".62"/>
<rect x="36" y="37" width="1" height="1" fill="#8a8a8a" opacity=".62"/>
<rect x="20" y="39" width="10" height="1" fill="#8a6250" opacity=".62"/>
<rect x="30" y="39" width="1" height="1" fill="#8a8a8a" opacity=".62"/>
<rect x="20" y="41" width="1" height="1" fill="#8a6250" opacity=".62"/>
<rect x="21" y="41" width="9" height="1" fill="#264f78" opacity=".62"/>
<rect x="30" y="41" width="1" height="1" fill="#8a6250" opacity=".62"/>
<rect x="31" y="41" width="1" height="1" fill="#8a8a8a" opacity=".62"/>
<rect x="20" y="43" width="8" height="1" fill="#8a6250" opacity=".62"/>
<rect x="28" y="43" width="1" height="1" fill="#8a8a8a" opacity=".62"/>
<rect x="20" y="45" width="66" height="1" fill="#8a6250" opacity=".62"/>
<rect x="16" y="47" width="2" height="1" fill="#8a8a8a" opacity=".62"/>
<rect x="16" y="49" width="9" height="1" fill="#5d8aa3" opacity=".62"/>
<rect x="25" y="49" width="2" height="1" fill="#8a8a8a" opacity=".62"/>
<rect x="27" y="49" width="1" height="1" fill="#8a8a8a" opacity=".62"/>
<rect x="20" y="51" width="11" height="1" fill="#5d8aa3" opacity=".62"/>
<rect x="31" y="51" width="2" height="1" fill="#8a8a8a" opacity=".62"/>
<rect x="33" y="51" width="7" height="1" fill="#7f9277" opacity=".62"/>
<rect x="40" y="51" width="1" height="1" fill="#8a8a8a" opacity=".62"/>
<rect x="20" y="53" width="16" height="1" fill="#5d8aa3" opacity=".62"/>
<rect x="36" y="53" width="2" height="1" fill="#8a8a8a" opacity=".62"/>
<rect x="38" y="53" width="4" height="1" fill="#3f6f9f" opacity=".62"/>
<rect x="16" y="55" width="2" height="1" fill="#8a8a8a" opacity=".62"/>
<rect x="16" y="57" width="10" height="1" fill="#5d8aa3" opacity=".62"/>
<rect x="26" y="57" width="2" height="1" fill="#8a8a8a" opacity=".62"/>
<rect x="28" y="57" width="1" height="1" fill="#8a8a8a" opacity=".62"/>
<rect x="20" y="59" width="12" height="1" fill="#5d8aa3" opacity=".62"/>
<rect x="32" y="59" width="2" height="1" fill="#8a8a8a" opacity=".62"/>
<rect x="34" y="59" width="1" height="1" fill="#8a8a8a" opacity=".62"/>
<rect x="24" y="61" width="1" height="1" fill="#8a8a8a" opacity=".62"/>
<rect x="28" y="63" width="6" height="1" fill="#5d8aa3" opacity=".62"/>
<rect x="34" y="63" width="2" height="1" fill="#8a8a8a" opacity=".62"/>
<rect x="36" y="63" width="5" height="1" fill="#8a6250" opacity=".62"/>
<rect x="41" y="63" width="1" height="1" fill="#8a8a8a" opacity=".62"/>
<rect x="28" y="65" width="7" height="1" fill="#5d8aa3" opacity=".62"/>
<rect x="35" y="65" width="2" height="1" fill="#8a8a8a" opacity=".62"/>
<rect x="37" y="65" width="9" height="1" fill="#7f9277" opacity=".62"/>
<rect x="46" y="65" width="1" height="1" fill="#8a8a8a" opacity=".62"/>
<rect x="28" y="67" width="8" height="1" fill="#5d8aa3" opacity=".62"/>
<rect x="36" y="67" width="2" height="1" fill="#8a8a8a" opacity=".62"/>
<rect x="38" y="67" width="5" height="1" fill="#7f9277" opacity=".62"/>
<rect x="43" y="67" width="1" height="1" fill="#8a8a8a" opacity=".62"/>
<rect x="28" y="69" width="8" height="1" fill="#5d8aa3" opacity=".62"/>
<rect x="36" y="69" width="2" height="1" fill="#8a8a8a" opacity=".62"/>
<rect x="38" y="69" width="5" height="1" fill="#8a6250" opacity=".62"/>
<rect x="24" y="73" width="2" height="1" fill="#8a8a8a" opacity=".62"/>
<rect x="24" y="75" width="1" height="1" fill="#8a8a8a" opacity=".62"/>
<rect x="28" y="77" width="6" height="1" fill="#5d8aa3" opacity=".62"/>
<rect x="34" y="77" width="2" height="1" fill="#8a8a8a" opacity=".62"/>
<rect x="36" y="77" width="7" height="1" fill="#8a6250" opacity=".62"/>
<rect x="43" y="77" width="1" height="1" fill="#8a8a8a" opacity=".62"/>
<rect x="28" y="79" width="7" height="1" fill="#5d8aa3" opacity=".62"/>
<rect x="35" y="79" width="2" height="1" fill="#8a8a8a" opacity=".62"/>
<rect x="37" y="79" width="9" height="1" fill="#7f9277" opacity=".62"/>
<rect x="46" y="79" width="1" height="1" fill="#8a8a8a" opacity=".62"/>
<rect x="28" y="81" width="8" height="1" fill="#5d8aa3" opacity=".62"/>
<rect x="36" y="81" width="2" height="1" fill="#8a8a8a" opacity=".62"/>
<rect x="38" y="81" width="4" height="1" fill="#7f9277" opacity=".62"/>
<rect x="42" y="81" width="1" height="1" fill="#8a8a8a" opacity=".62"/>
<rect x="28" y="83" width="8" height="1" fill="#5d8aa3" opacity=".62"/>
<rect x="36" y="83" width="2" height="1" fill="#8a8a8a" opacity=".62"/>
<rect x="38" y="83" width="5" height="1" fill="#8a6250" opacity=".62"/>
<rect x="43" y="83" width="1" height="1" fill="#8a8a8a" opacity=".62"/>
<rect x="28" y="85" width="15" height="1" fill="#5d8aa3" opacity=".62"/>
<rect x="43" y="85" width="2" height="1" fill="#8a8a8a" opacity=".62"/>
<rect x="45" y="85" width="4" height="1" fill="#3f6f9f" opacity=".62"/>
<rect x="24" y="87" width="1" height="1" fill="#8a8a8a" opacity=".62"/>
<rect x="20" y="89" width="1" height="1" fill="#8a8a8a" opacity=".62"/>
<rect x="16" y="91" width="1" height="1" fill="#8a8a8a" opacity=".62"/>
<rect x="12" y="93" width="1" height="1" fill="#8a8a8a" opacity=".62"/>
<rect x="8" y="95" width="1" height="1" fill="#8a8a8a" opacity=".62"/>
<rect x="4" y="97" width="1" height="1" fill="#8a8a8a" opacity=".62"/>
<rect x="0" y="99" width="1" height="1" fill="#8a8a8a" opacity=".62"/>
</svg>
<div class="b" style="left:1891px;top:93px;width:13px;height:324px;border-left:1px solid #121212"></div>
<div class="b" style="left:1901px;top:116px;width:3px;height:6px;background:#cca700"></div>
<div class="b" style="left:1901px;top:135px;width:3px;height:6px;background:#cca700"></div>
<div class="b" style="left:1901px;top:164px;width:3px;height:6px;background:#cca700"></div>
<div class="b" style="left:1892px;top:188px;width:12px;height:2px;background:#a0a0a0"></div>
<div class="b" style="left:418px;top:417px;width:1486px;height:378px;background:#181818;border-top:1px solid #2b2b2b"></div>
<div class="a" style="left:438px;top:425px;line-height:22px;font-size:11px;color:#9d9d9d;letter-spacing:0px">问题</div>
<div class="b" style="left:464px;top:427px;width:16px;height:16px;border-radius:8px;background:#0078d4"></div>
<div class="a" style="left:464px;top:427px;width:16px;text-align:center;line-height:16px;font-size:11px;color:#fff">3</div>
<div class="a" style="left:502px;top:425px;line-height:22px;font-size:11px;color:#9d9d9d;letter-spacing:0px">输出</div>
<div class="a" style="left:548px;top:425px;line-height:22px;font-size:11px;color:#9d9d9d;letter-spacing:0px">调试控制台</div>
<div class="a" style="left:627px;top:425px;line-height:22px;font-size:11px;color:#e7e7e7;letter-spacing:0px">终端</div>
<div class="b" style="left:625px;top:446px;width:26px;height:1px;background:#0078d4"></div>
<div class="a" style="left:672px;top:425px;line-height:22px;font-size:11px;color:#9d9d9d;letter-spacing:0px">端口</div>
<svg style="left:1665px;top:429px" width="14" height="14" viewBox="0 0 14 14" fill="none" stroke="#ccc" stroke-width="1.100"><path d="M7 .500v13M.500 7h13"/></svg>
<svg style="left:1685px;top:433px" width="9" height="6" viewBox="0 0 9 6" fill="none" stroke="#ccc" stroke-width="1.100"><path d="M.5.800 4.500 4.800 8.500.800"/></svg>
<svg style="left:1704px;top:428px" width="15" height="14" viewBox="0 0 15 14" fill="none" stroke="#ccc" stroke-width="1.100"><rect x=".6" y=".6" width="13.800" height="12.800" rx="1.500"/><path d="M3.300 3.800 7 7 3.300 10.200M7.500 10.300h4"/></svg>
<div class="a" style="left:1724px;top:425px;line-height:22px;font-size:11.500px;color:#ccc;letter-spacing:-0.400px">bash</div>
<svg style="left:1758px;top:430px" width="14" height="13" viewBox="0 0 14 13" fill="none" stroke="#ccc" stroke-width="1.100"><rect x=".6" y=".6" width="12.800" height="11.800" rx="1.300"/><path d="M7 1v11"/></svg>
<svg style="left:1784px;top:428px" width="14" height="15" viewBox="0 0 14 15" fill="none" stroke="#ccc" stroke-width="1.100"><path d="M.500 3.500h13M4.500 3.300V1.500a1 1 0 0 1 1-1h3a1 1 0 0 1 1 1v1.800M2.300 3.500v9.500a1.500 1.500 0 0 0 1.500 1.500h6.400a1.500 1.500 0 0 0 1.500-1.500V3.500M5.500 6v6M8.500 6v6"/></svg>
<svg style="left:1810px;top:434px" width="14" height="4" viewBox="0 0 14 4" fill="#ccc"><circle cx="2" cy="2" r="1"/><circle cx="7" cy="2" r="1"/><circle cx="12" cy="2" r="1"/></svg>
<div class="b" style="left:1836px;top:427px;width:1px;height:16px;background:#5a5a5a"></div>
<svg style="left:1849px;top:429px" width="14" height="13" viewBox="0 0 14 13" fill="none" stroke="#ccc" stroke-width="1.200"><path d="M.600 4V.600H4.500M9.500.600h3.900V4M13.400 9v3.400H9.500M4.500 12.400H.600V9"/></svg>
<svg style="left:1877px;top:431px" width="10" height="10" viewBox="0 0 10 10" fill="none" stroke="#ccc" stroke-width="1.200"><path d="M.5.500l9 9M9.500.500l-9 9"/></svg>
<div class="tl" style="top:488px"><span class="g">ha@DESKTOP-H85GTAK</span> <span class="m">MINGW64</span> <span class="y">~/Downloads/lcp067-gcc-bl</span></div>
<div class="tl" style="top:505px">$ ls build/*.hex</div>
<div class="tl" style="top:522px">build/lcp067-gcc-bl.hex</div>
<div class="tl" style="top:556px"><span class="g">ha@DESKTOP-H85GTAK</span> <span class="m">MINGW64</span> <span class="y">~/Downloads/lcp067-gcc-bl</span></div>
<div class="tl" style="top:573px">$ pyocd list -p</div>
<div class="tl" style="top:590px">  #   Probe/Board             Unique ID            Target</div>
<div class="tl" style="top:607px">-----------------------------------------------------------</div>
<div class="tl" style="top:624px">  <span class="m">0</span>   <span class="g">Arm DAPLink CMSIS-DAP</span>   <span class="cy">3a19509cefa9954e01</span>   n/a</div>
<div class="tl" style="top:658px"><span class="g">ha@DESKTOP-H85GTAK</span> <span class="m">MINGW64</span> <span class="y">~/Downloads/lcp067-gcc-bl</span></div>
<div class="tl" style="top:675px">$ pyocd erase -c -t lcm32f067 --pack ~/AppData/Local/cmsis-pack-manager/Keil/LCM32F0xx_DFP/0.4.70.pack</div>
<div class="tl" style="top:692px"><span class="bl">0002615</span> <span class="y">W Board ID 3a19 is not recognized [mbed_board]</span></div>
<div class="tl" style="top:709px"><span class="bl">0005004</span> <span class="cy">I</span> Erasing chip... [eraser]</div>
<div class="tl" style="top:726px"><span class="bl">0005061</span> <span class="cy">I</span> Chip erase complete [eraser]</div>
<div class="tl" style="top:760px"><span class="g">ha@DESKTOP-H85GTAK</span> <span class="m">MINGW64</span> <span class="y">~/Downloads/lcp067-gcc-bl</span></div>
<div class="tl" style="top:777px">$ </div>
<div class="b" style="left:452px;top:778px;width:7px;height:15px;background:#ccc"></div>
<div class="b" style="left:418px;top:452px;width:1472px;height:18px;background:#181818"></div>
<div class="b" style="left:419px;top:470px;width:1471px;height:2px;background:linear-gradient(180deg,#0a0a0a,rgba(10,10,10,.2))"></div>
<div class="tl" style="top:452px">$ ls build/*.hex</div>
<div class="b" style="left:421px;top:488px;width:2px;height:51px;background:#3c3c3c"></div>
<div class="b" style="left:425px;top:509px;width:8px;height:8px;border-radius:4px;background:#2488b5"></div>
<div class="b" style="left:425px;top:577px;width:8px;height:8px;border-radius:4px;background:#2488b5"></div>
<div class="b" style="left:425px;top:679px;width:8px;height:8px;border-radius:4px;background:#2488b5"></div>
<div class="b" style="left:425px;top:781px;width:8px;height:8px;border-radius:4px;border:1.500px solid #7a7a7a"></div>
<div class="b" style="left:421px;top:668px;width:793px;height:98px;border:4px solid #f40a0a"></div>
<div class="b" style="left:1891px;top:454px;width:13px;height:340px;border-left:1px solid #060606;border-top:1px solid #060606"></div>
<div class="b" style="left:1892px;top:628px;width:12px;height:166px;background:#434343"></div>
<div class="b" style="left:1892px;top:467px;width:4px;height:8px;background:#1b81a8"></div>
<div class="b" style="left:1892px;top:500px;width:4px;height:8px;background:#1b81a8"></div>
<div class="b" style="left:1892px;top:533px;width:4px;height:8px;background:#1b81a8"></div>
<div class="b" style="left:1892px;top:567px;width:4px;height:8px;background:#1b81a8"></div>
<div class="b" style="left:1892px;top:615px;width:4px;height:8px;background:#1b81a8"></div>
<div class="b" style="left:1892px;top:648px;width:4px;height:8px;background:#1b81a8"></div>
<div class="b" style="left:1892px;top:682px;width:4px;height:8px;background:#1b81a8"></div>
<div class="b" style="left:1892px;top:731px;width:4px;height:8px;background:#1b81a8"></div>
<div class="b" style="left:1892px;top:781px;width:4px;height:8px;background:#8a8a8a"></div>
<div class="b" style="left:1px;top:794px;width:1903px;height:22px;background:#181818;border-top:1px solid #2b2b2b"></div>
<div class="b" style="left:1px;top:795px;width:34px;height:21px;background:#0078d4"></div>
<svg style="left:12px;top:799px" width="12" height="13" viewBox="0 0 12 13" fill="none" stroke="#fff" stroke-width="1.300"><path d="M1 4.500 5 8.500 1 12.500M11 .500 7 4.500 11 8.500"/></svg>
<svg style="left:43px;top:799px" width="14" height="14" viewBox="0 0 14 14" fill="none" stroke="#ccc" stroke-width="1.100"><circle cx="7" cy="7" r="6.200"/><path d="M4.500 4.500l5 5M9.500 4.500l-5 5"/></svg>
<div class="st" style="left:60px">0</div>
<svg style="left:71px;top:799px" width="13" height="13" viewBox="0 0 13 13" fill="none" stroke="#ccc" stroke-width="1.100" stroke-linejoin="round"><path d="M6.500 1 12.300 12H.700z"/><path d="M6.500 5v4M6.500 10v1.200"/></svg>
<div class="st" style="left:87px">3</div>
<div class="st" style="left:1415px">行 21，列 31 (已选择9)</div>
<div class="st" style="left:1553px">空格: 4</div>
<div class="st" style="left:1605px">UTF-8</div>
<div class="st" style="left:1652.500px;letter-spacing:-1.200px">CRLF</div>
<div class="st" style="left:1696px;letter-spacing:3px">{}</div>
<div class="st" style="left:1715px">JSON with Comments</div>
<svg style="left:1845.500px;top:798.500px" width="15.500" height="13.500" viewBox="0 0 16 15" fill="none" stroke="#ccc" stroke-width="1.300"><path d="M2.500 6.500C2 3 3.500 1.500 5.500 1.500S8 3 8 4.500C8 3 8.500 1.500 10.500 1.500S14 3 13.500 6.500"/><path d="M2.500 6.500C1 7.500 1 9 1 10.500 3 13 5.500 13.800 8 13.800s5-.800 7-3.300C15 9 15 7.500 13.500 6.500 12 7.500 9.500 7.300 8 6 6.500 7.300 4 7.500 2.500 6.500z"/><path d="M6 9.500v2M10 9.500v2"/></svg>
<svg style="left:1877px;top:799px" width="12" height="13" viewBox="0 0 14 15" fill="none" stroke="#ccc" stroke-width="1.100" stroke-linejoin="round"><path d="M7 1C4.200 1 2.700 3 2.700 5.500v3.300L1 11.500h12l-1.700-2.700V5.500C11.300 3 9.800 1 7 1z"/><path d="M5.500 12a1.600 1.600 0 0 0 3 0"/></svg>
<div class="b" style="left:0;top:816px;width:1904px;height:39px;background:linear-gradient(90deg,#20353c 0%,#21383f 30%,#233f49 55%,#21394a 70%,#1e2e4a 84%,#1b2848 100%)"></div>
<svg style="left:17px;top:828px" width="16" height="16" viewBox="0 0 17 17" fill="#fff"><path d="M0 2.400 6.900 1.400V8H0zM7.700 1.300 17 0v8H7.700zM0 8.800h6.900v6.700L0 14.500zM7.700 8.800H17V17l-9.300-1.300z"/></svg>
<div class="b" style="left:49px;top:816px;width:288px;height:39px;background:#f3f3f3"></div>
<svg style="left:60px;top:827px" width="18" height="18" viewBox="60 827 18 18" fill="none" stroke="#1c1c1c" stroke-width="1.250"><circle cx="71.300" cy="833.500" r="5"/><path d="M67.800 837.100 61.300 843.700"/></svg>
<div class="a" style="left:89px;top:826px;line-height:22px;font-size:14px;color:#1f1f1f">搜索</div>
<svg style="left:262px;top:814px" width="80" height="41" viewBox="262 814 80 41"><defs><clipPath id="nm"><path d="M276.500 855C275 846 276.500 838 278.500 831 281.500 821 289 817 294.500 817S307.500 821 310.500 831C312.500 838 314 846 312.500 855Z"/></clipPath><radialGradient id="fg" cx=".5" cy=".45" r=".6"><stop offset="0" stop-color="#f3d36a"/><stop offset="1" stop-color="#d9a233"/></radialGradient><clipPath id="tb"><rect x="262" y="816" width="75" height="39"/></clipPath></defs><g clip-path="url(#tb)"><path d="M276.500 855C275 846 276.500 838 278.500 831 281.500 821 289 817 294.500 817S307.500 821 310.500 831C312.500 838 314 846 312.500 855Z" fill="#ecc14a"/><g clip-path="url(#nm)" fill="none" stroke="#1f78b0" stroke-width="1.400"><ellipse cx="294.500" cy="837" rx="11.500" ry="12"/><ellipse cx="294.500" cy="837" rx="15" ry="16.500"/><ellipse cx="294.500" cy="837" rx="18.500" ry="21"/><path d="M277 845h36M276 848.500h38M276 852h38" stroke-width="1.300"/></g><path d="M289.500 843h10.500l2 12h-14.500z" fill="#dba936"/><ellipse cx="294.800" cy="836.800" rx="8.400" ry="9.300" fill="url(#fg)"/><path d="M292 819h5v9h-5z" fill="#e7b93f"/><ellipse cx="296.300" cy="820.300" rx="1.500" ry="2" fill="#1f78b0"/><path d="M295.200 823.200h2.400l-.400 3.800h-1.600z" fill="#cf2b20"/><path d="M287 834.400h5.800M296.300 834.400h5.800" stroke="#1f5f8f" stroke-width="1.700"/><path d="M289 834.400h2M298.300 834.400h2" stroke="#111" stroke-width="1.300"/><path d="M270.500 836 274.200 855h-5.600z" fill="#e0ad38"/><path d="M269.700 844.500h2.900v1.500h-3.100zM269.200 850h4v1.500h-4.200z" fill="#1f8fc0"/><path d="M269.500 847.500h3.600l.2 1.700h-4z" fill="#d9481c"/><path d="M270.500 836C277 839 281 847 283.500 855" fill="none" stroke="#d9a233" stroke-width="1"/><path d="M308 856C313 849 318 843 324 840 329 837.500 331 834 329 831.500 326.500 828.500 321 829 318.500 832.500L316 838" fill="none" stroke="#e0ad38" stroke-width="2.200"/><path d="M308 856C313 849 318 843 324 840 329 837.500 331 834 329 831.500 326.500 828.500 321 829 318.500 832.500L316 838" fill="none" stroke="#1f8fc0" stroke-width="2.200" stroke-dasharray="2 2.400"/></g></svg>
<svg style="left:352px;top:827px" width="18" height="16" viewBox="0 0 18 16" fill="none" stroke="#fff" stroke-width="1.300"><path d="M.700 2.500V.700h11.600v1.800M.700 13.500v1.800h11.600v-1.800"/><rect x="1.300" y="4.300" width="10.400" height="7.400"/><path d="M15.500 0v4M15.500 8.500v7.500"/><rect x="14" y="4.800" width="3" height="3" fill="#fff" stroke="none"/></svg>
<svg style="left:399px;top:824px" width="25" height="25" viewBox="0 0 25 25"><defs><linearGradient id="eg" x1="0" y1="0" x2="1" y2="0.300"><stop offset="0" stop-color="#2aa6e8"/><stop offset=".55" stop-color="#33c3c9"/><stop offset="1" stop-color="#5ad65a"/></linearGradient><linearGradient id="eb" x1="0" y1="0" x2="0" y2="1"><stop offset="0" stop-color="#1b8fe0"/><stop offset="1" stop-color="#0d4f9c"/></linearGradient></defs><circle cx="12.500" cy="12.500" r="12.200" fill="url(#eb)"/><path d="M.500 11C1.500 4.500 6.500 .300 12.500 .300 19.500 .300 24.700 5.500 24.700 11c0 3.500-2.700 5.300-5.700 5.300-2.500 0-3.600-1-3.300-2 .400-.900 1.300-1.700 1.300-3.300C17 8 14.300 5.700 11 5.700 5.500 5.700 1.500 9 .500 11z" fill="url(#eg)"/><path d="M9.500 13.500c-.500 5 3.500 9 9 8-2 2.300-4.500 3.200-7 3.200C5 24.700.300 19.500.300 13 1 10 4.500 7.500 8.500 7.500 7.500 9.500 9.800 11 9.500 13.500z" fill="#1670c9"/><path d="M14.500 16.500c1 .900 3.500 1.200 5.500 .300-1.500 3-4 4.500-6.500 4.500-3 0-4.500-2.500-4-5 .500-2.500 2-3.500 3.500-3.500.500 1 .500 2.800 1.500 3.700z" fill="#0f4a94"/></svg>
<div class="b" style="left:392px;top:853px;width:40px;height:2px;background:linear-gradient(180deg,rgba(118,185,237,.35) 50%,#76b9ed 50%)"></div>
<svg style="left:449px;top:826px" width="24" height="20" viewBox="0 0 24 20"><path d="M1 2.500h8l2 2h12v3H1z" fill="#e5a41c"/><path d="M1 5.500h22v13H1z" fill="#fbd45c"/><path d="M5 11.500h14v7H5z" fill="#2f86d6"/><path d="M9 15h6v3.500H9z" fill="#fbd45c"/></svg>
<div class="b" style="left:441px;top:853px;width:40px;height:2px;background:linear-gradient(180deg,rgba(118,185,237,.35) 50%,#76b9ed 50%)"></div>
<svg style="left:498px;top:824px" width="24" height="24" viewBox="0 0 24 24"><path d="M7 6V3.500A2.500 2.500 0 0 1 9.500 1h5A2.500 2.500 0 0 1 17 3.500V6" fill="none" stroke="#1e90d8" stroke-width="1.800"/><path d="M.500 5.500h23v15a3 3 0 0 1-3 3h-17a3 3 0 0 1-3-3z" fill="#fafafa"/><rect x="7" y="9.500" width="4.500" height="4.500" fill="#f25022"/><rect x="12.500" y="9.500" width="4.500" height="4.500" fill="#7fba00"/><rect x="7" y="15" width="4.500" height="4.500" fill="#00a4ef"/><rect x="12.500" y="15" width="4.500" height="4.500" fill="#ffb900"/></svg>
<svg style="left:547px;top:824px" width="24" height="24" viewBox="0 0 24 24"><defs><linearGradient id="og" x1="0" y1="0" x2="1" y2="1"><stop offset="0" stop-color="#3f8ef2"/><stop offset="1" stop-color="#5a4fd6"/></linearGradient></defs><path d="M4 9.500 14 1.300 23 8.500V20a3 3 0 0 1-3 3H7a3 3 0 0 1-3-3z" fill="#28a8ea"/><path d="M4 9.500 14 1.300 23 8.500 13.500 15z" fill="url(#og)"/><path d="M9 8.500 15.500 4l4.500 3.500-6.500 4.700z" fill="#4d45c9"/><path d="M4 13 23 10.500V20a3 3 0 0 1-3 3H7a3 3 0 0 1-3-3z" fill="#35b8f4"/><path d="M12 23 23 13v7a3 3 0 0 1-3 3z" fill="#6fd0fa"/><rect x="0" y="11.500" width="10.500" height="10.500" rx="2" fill="#155fc0"/><circle cx="5.200" cy="16.700" r="2.700" fill="none" stroke="#fff" stroke-width="1.500"/></svg>
<svg style="left:595px;top:827px" width="27" height="20" viewBox="595 827 27 20" fill="none" stroke-width="2.700" stroke-linejoin="round" stroke-linecap="butt"><defs><linearGradient id="wg" x1="0" y1="0" x2="0" y2="1"><stop offset="0" stop-color="#f6241f"/><stop offset="1" stop-color="#fb5410"/></linearGradient></defs><path d="M609.500 830.700H598L604.400 843.600 611.300 830.200" stroke="url(#wg)"/><path d="M612.800 830.700H619.300L612.400 843.600 608.600 836.300" stroke="url(#wg)"/></svg>
<svg style="left:646px;top:826px" width="21" height="20" viewBox="0 0 21 20"><rect x="0" y="0" width="21" height="20" rx="2.500" fill="#2f7036"/><path d="M2.500 2h16L11 18z" fill="#fff"/><path d="M8.500 3.500v5M8.500 6.500c0 2 3 2 3 0V3.500" stroke="#2f7036" stroke-width="1.300" fill="none"/><text x="14" y="18.500" font-family="Liberation Sans,sans-serif" font-size="7" font-weight="bold" fill="#fff">5</text></svg>
<div class="b" style="left:637px;top:853px;width:31px;height:2px;background:linear-gradient(180deg,rgba(118,185,237,.35) 50%,#76b9ed 50%)"></div>
<div class="b" style="left:671px;top:853px;width:6px;height:2px;background:linear-gradient(180deg,rgba(118,185,237,.35) 50%,#76b9ed 50%)"></div>
<div class="b" style="left:682px;top:816px;width:48px;height:39px;background:#4b5c63"></div>
<div class="b" style="left:682px;top:853px;width:48px;height:2px;background:linear-gradient(180deg,rgba(118,185,237,.35) 50%,#76b9ed 50%)"></div>
<svg style="left:693px;top:824px" width="25" height="24" viewBox="0 0 100 100"><path d="M71 4 L30 42 L12 28 L4 32 L22 50 L4 68 L12 72 L30 58 L71 96 L96 85 V15 Z M72 28 V72 L42 50 Z" fill="#0a7bd0" fill-rule="evenodd"/><path d="M71 4 L96 15 V85 L71 96 Z" fill="#2aa9f3"/></svg>
<svg style="left:1583px;top:823px" width="11" height="24" viewBox="0 0 11 24"><rect x=".5" y=".500" width="10" height="23" rx="3.500" fill="#fff"/><path d="M1.500 4a2.500 2.500 0 0 1 2.500-2.500h1.500v11l-2 3v6.500A2.500 2.500 0 0 1 1.500 19.500z" fill="#1d428a"/><path d="M6.500 1.500H7A2.500 2.500 0 0 1 9.500 4v15.500A2.500 2.500 0 0 1 7 22H5.500v-6l1-3.500z" fill="#c8102e"/></svg>
<div class="a" style="left:1609px;top:825px;line-height:22px;font-size:14px;color:#f25c5c">比赛直播</div>
<svg style="left:1691px;top:831px" width="13" height="8" viewBox="0 0 13 8" fill="none" stroke="#fff" stroke-width="1.400"><path d="M.700 7.300 6.500 1.500 12.300 7.300"/></svg>
<svg style="left:1713px;top:828px" width="17" height="16" viewBox="0 0 17 16" fill="none" stroke="#fff" stroke-width="1.200"><path d="M3.500 4V1.500h13v9H8M9.500 10.500v3M6 14h8"/><rect x=".600" y="4" width="4" height="10" /><path d="M1.500 6h2"/></svg>
<svg style="left:1737px;top:828px" width="18" height="16" viewBox="0 0 18 16" fill="none" stroke="#fff" stroke-width="1.200"><path d="M.700 5.500h2.800L7.500 2v12l-4-3.500H.700z"/><path d="M10 5.500c1 1.500 1 3.500 0 5M12.500 3.500c2 2.700 2 6.300 0 9M15 1.500c3 4 3 9 0 13"/></svg>
<div class="a" style="left:1759px;top:825px;line-height:22px;font-size:16px;color:#fff">英</div>
<div class="a" style="left:1786px;top:819px;width:60px;text-align:center;line-height:17px;font-size:12px;letter-spacing:-0.300px;color:#fff">13:51</div>
<div class="a" style="left:1781px;top:838px;width:70px;text-align:center;line-height:17px;font-size:12px;letter-spacing:0.530px;color:#fff">2025/11/4</div>
<svg style="left:1864px;top:828px" width="17" height="17" viewBox="0 0 17 17" fill="none" stroke="#fff" stroke-width="1.200"><path d="M.600.600h15.800v11.800H10.500L8.500 15l-2-2.600H.600z"/></svg>
<div class="b" style="left:1899px;top:816px;width:1px;height:39px;background:#6b7a86"></div>
</body></html>
